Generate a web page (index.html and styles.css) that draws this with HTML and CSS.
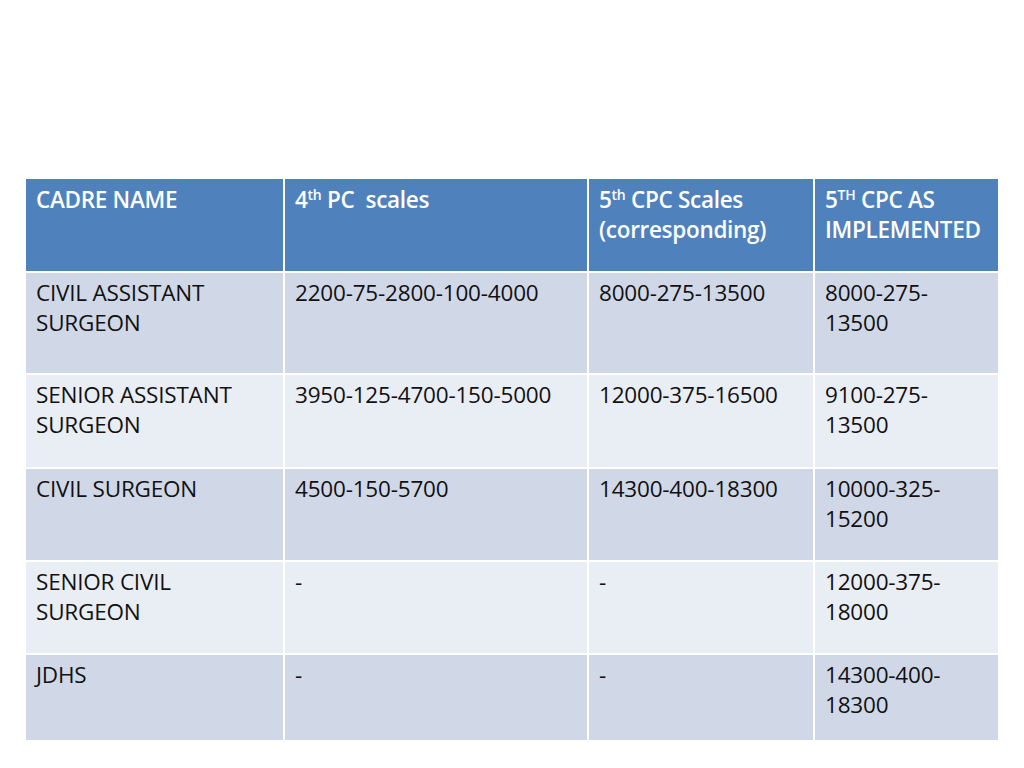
FILE: index.html
```html
<!DOCTYPE html>
<html>
<head>
<meta charset="utf-8">
<link rel="stylesheet" href="styles.css">
</head>
<body>
<div class="slide">
  <div class="table">
    <div class="cell head">CADRE NAME</div>
    <div class="cell head"><span>4<sup>th</sup> PC &nbsp;scales</span></div>
    <div class="cell head"><span>5<sup>th</sup> CPC Scales</span><br><span>(corresponding)</span></div>
    <div class="cell head"><span>5<sup>TH</sup> CPC AS</span><br><span>IMPLEMENTED</span></div>

    <div class="cell odd">CIVIL ASSISTANT SURGEON</div>
    <div class="cell odd">2200-75-2800-100-4000</div>
    <div class="cell odd">8000-275-13500</div>
    <div class="cell odd">8000-275-13500</div>

    <div class="cell even">SENIOR ASSISTANT SURGEON</div>
    <div class="cell even">3950-125-4700-150-5000</div>
    <div class="cell even">12000-375-16500</div>
    <div class="cell even">9100-275-13500</div>

    <div class="cell odd">CIVIL SURGEON</div>
    <div class="cell odd">4500-150-5700</div>
    <div class="cell odd">14300-400-18300</div>
    <div class="cell odd">10000-325-15200</div>

    <div class="cell even">SENIOR CIVIL SURGEON</div>
    <div class="cell even">-</div>
    <div class="cell even">-</div>
    <div class="cell even">12000-375-18000</div>

    <div class="cell odd">JDHS</div>
    <div class="cell odd">-</div>
    <div class="cell odd">-</div>
    <div class="cell odd">14300-400-18300</div>
  </div>
</div>
</body>
</html>
```

FILE: styles.css
```css
html, body {
  margin: 0;
  padding: 0;
  background: #ffffff;
}

.slide {
  width: 1024px;
  height: 768px;
  padding: 179px 0 0 26px;
  box-sizing: border-box;
  font-family: "Open Sans", "Liberation Sans", sans-serif;
}

.table {
  width: 972px;
  display: grid;
  grid-template-columns: 257px 302px 224px 183px;
  grid-template-rows: 92px 100px 92px 91px 91px 85px;
  column-gap: 2px;
  row-gap: 2px;
  background: #ffffff;
}

.cell {
  font-size: 22.5px;
  line-height: 30px;
  letter-spacing: -0.2px;
  padding: 5px 14px 0 10px;
  color: #111111;
  overflow-wrap: break-word;
}

.head {
  background: #4f81bd;
  color: #ffffff;
  font-weight: 600;
  letter-spacing: -0.3px;
  padding-top: 6px;
  padding-right: 8px;
}

.odd {
  background: #d0d8e8;
}

.even {
  background: #e9edf4;
}

sup {
  font-size: 14px;
  line-height: 1;
  vertical-align: 8px;
}
```
